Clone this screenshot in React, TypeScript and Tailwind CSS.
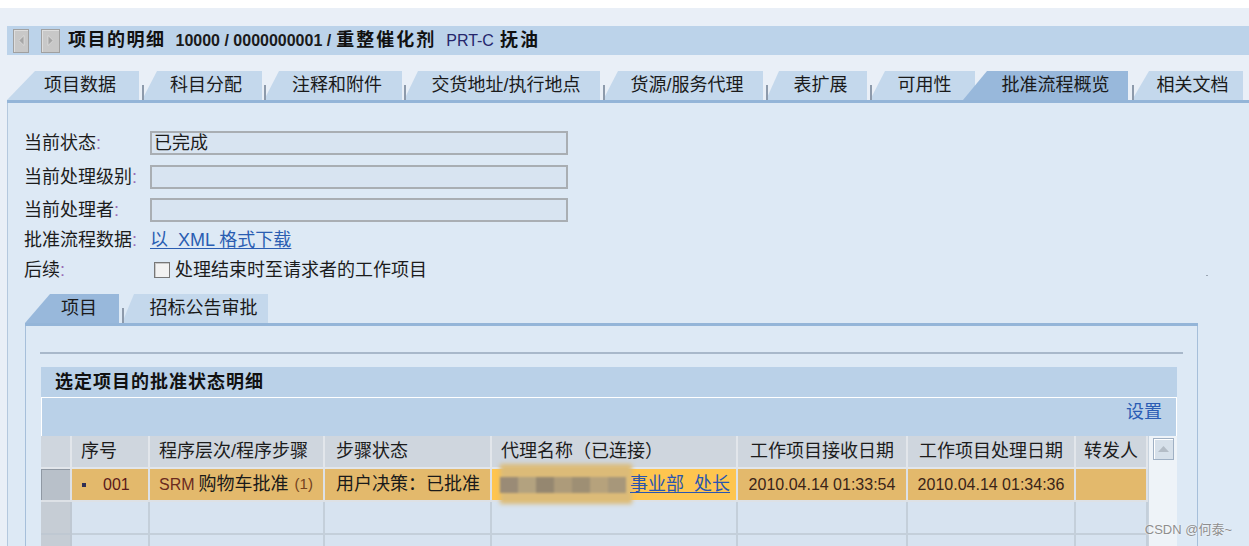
import React from "react";

type TabDef = {
  label: string;
  w: string;
  ml: string;
  pl: string;
  shape: string;
  selected?: boolean;
  mark?: boolean;
};

const mainTabs: TabDef[] = [
  { label: "项目数据", w: "w-[132px]", ml: "", pl: "pl-[14px]", shape: "[clip-path:polygon(28px_0,100%_0,100%_100%,0_100%)]" },
  { label: "科目分配", w: "w-[120px]", ml: "ml-[3px]", pl: "pl-[8px]", shape: "[clip-path:polygon(15px_0,100%_0,100%_100%,0_100%)]", mark: true },
  { label: "注释和附件", w: "w-[138px]", ml: "ml-[2px]", pl: "pl-[8px]", shape: "[clip-path:polygon(15px_0,100%_0,100%_100%,0_100%)]", mark: true },
  { label: "交货地址/执行地点", w: "w-[196px]", ml: "ml-[2px]", pl: "pl-[8px]", shape: "[clip-path:polygon(14px_0,100%_0,100%_100%,0_100%)]", mark: true },
  { label: "货源/服务代理", w: "w-[160px]", ml: "ml-[3px]", pl: "pl-[8px]", shape: "[clip-path:polygon(15px_0,100%_0,100%_100%,0_100%)]", mark: true },
  { label: "表扩展", w: "w-[101px]", ml: "ml-[3px]", pl: "pl-[8px]", shape: "[clip-path:polygon(13px_0,100%_0,100%_100%,0_100%)]", mark: true },
  { label: "可用性", w: "w-[105px]", ml: "ml-[3px]", pl: "pl-[4px]", shape: "[clip-path:polygon(15px_0,100%_0,100%_100%,0_100%)]", mark: true },
  { label: "批准流程概览", w: "w-[165px]", ml: "-ml-[12px]", pl: "pl-[20px]", shape: "[clip-path:polygon(24px_0,100%_0,100%_100%,0_100%)]", selected: true },
  { label: "相关文档", w: "w-[111px]", ml: "ml-[4px]", pl: "pl-[10px]", shape: "[clip-path:polygon(17px_0,100%_0,100%_100%,0_100%)]", mark: true },
];

const subTabs: TabDef[] = [
  { label: "项目", w: "w-[94px]", ml: "", pl: "pl-[14px]", shape: "[clip-path:polygon(25px_0,100%_0,100%_100%,0_100%)]", selected: true },
  { label: "招标公告审批", w: "w-[146px]", ml: "ml-[3px]", pl: "pl-[17px]", shape: "[clip-path:polygon(12px_0,100%_0,100%_100%,0_100%)]", mark: true },
];

function Tab({ t }: { t: TabDef }) {
  return (
    <div className={`relative h-[29px] shrink-0 ${t.w} ${t.ml} ${t.selected ? "z-10" : ""}`}>
      <div
        className={`flex h-full items-center justify-center whitespace-nowrap text-[18px] text-[#1a1a1a] ${t.pl} ${t.shape} ${
          t.selected ? "bg-[#98b8db]" : "bg-[#c4d8ec]"
        }`}
      >
        {t.label}
      </div>
      {t.mark && <span className="absolute bottom-0 left-0 h-[15px] w-[2px] bg-[#8d9aab]" />}
    </div>
  );
}

function NavButton({ dir, className = "" }: { dir: "left" | "right"; className?: string }) {
  return (
    <div
      className={`flex h-[24px] items-center justify-center border border-[#a0a0a0] bg-[#c8c8c8] shadow-[inset_1px_1px_0_#dedede] ${
        dir === "left" ? "w-[16px]" : "w-[19px]"
      } ${className}`}
    >
      <svg width="7" height="11" viewBox="0 0 7 11">
        {dir === "left" ? (
          <polygon points="6,0.5 0.8,5.5 6,10.5" fill="#a6a6a6" stroke="#e2e2e2" strokeWidth="0.7" />
        ) : (
          <polygon points="1,0.5 6.2,5.5 1,10.5" fill="#a6a6a6" stroke="#e2e2e2" strokeWidth="0.7" />
        )}
      </svg>
    </div>
  );
}

function FormLabel({ children }: { children: React.ReactNode }) {
  return (
    <span className="w-[126px] shrink-0 whitespace-nowrap text-[18px] text-[#1c1c1c]">
      {children}
      <span className="text-[#9a6bb5]">:</span>
    </span>
  );
}

function Field({ value }: { value?: string }) {
  return (
    <div className="flex h-[24px] w-[418px] items-center border-2 border-[#a9aeb3] bg-[#d8e4f1] pl-[2px] text-[18px] leading-[20px] text-[#1c1c1c]">
      {value}
    </div>
  );
}

const cols = "grid grid-cols-[31px_78px_175px_167px_246px_170px_168px_72px]";

const headers = [
  { t: "序号", c: "justify-start pl-[9px]" },
  { t: "程序层次/程序步骤", c: "justify-start pl-[9px]" },
  { t: "步骤状态", c: "justify-start pl-[11px]" },
  { t: "代理名称（已连接）", c: "justify-start pl-[9px]" },
  { t: "工作项目接收日期", c: "justify-center" },
  { t: "工作项目处理日期", c: "justify-center" },
  { t: "转发人", c: "justify-center" },
];

function EmptyRow() {
  return (
    <div className={cols}>
      <div className="h-[33px] border-b-2 border-r-2 border-[#bfc8d2] bg-[#c6cdd5]" />
      {headers.map((h) => (
        <div key={h.t} className="h-[33px] border-b-2 border-r-2 border-[#c4cfda] bg-[#d7e3f0]" />
      ))}
    </div>
  );
}

export default function App() {
  const dataCell = "flex h-[33px] items-center border-b-2 border-r-2 border-[#dde1e6] bg-[#e3b96c] whitespace-nowrap";
  return (
    <div className="relative h-[546px] w-[1249px] overflow-hidden bg-white font-['Liberation_Sans','Noto_Sans_CJK_SC',sans-serif] text-[#111]">
      <div className="mt-[8px] flex h-[538px] flex-col bg-[#e9eff7] pl-[7px]">
        <div className="h-[18px] shrink-0" />

        {/* title bar */}
        <div className="flex h-[29px] shrink-0 items-center whitespace-nowrap bg-[#bcd3ea] pl-[6px]">
          <NavButton dir="left" />
          <NavButton dir="right" className="ml-[12px]" />
          <span className="ml-[8px] text-[18px] font-bold tracking-[1.5px]">项目的明细</span>
          <span className="ml-[10px] text-[16px] font-bold text-[#1a1a1a]">10000 / 0000000001 /</span>
          <span className="ml-[5px] text-[18px] font-bold tracking-[2px]">重整催化剂</span>
          <span className="ml-[10px] text-[16px] text-[#25266c]">PRT-C</span>
          <span className="ml-[6px] text-[18px] font-bold tracking-[2px]">抚油</span>
        </div>

        <div className="h-[16px] shrink-0" />

        {/* main tabs */}
        <div className="flex h-[29px] shrink-0 items-end">
          {mainTabs.map((t) => (
            <Tab key={t.label} t={t} />
          ))}
        </div>
        <div className="h-[3px] shrink-0 bg-[#94b5d8]" />

        {/* main panel */}
        <div className="flex-1 border-l border-[#b4c8de] bg-[#dde9f5] pl-[16px]">
          <div className="pt-[28px]">
            <div className="flex h-[24px] items-center">
              <FormLabel>当前状态</FormLabel>
              <Field value="已完成" />
            </div>
            <div className="mt-[10px] flex h-[24px] items-center">
              <FormLabel>当前处理级别</FormLabel>
              <Field />
            </div>
            <div className="mt-[9px] flex h-[24px] items-center">
              <FormLabel>当前处理者</FormLabel>
              <Field />
            </div>
            <div className="mt-[6px] flex h-[24px] items-center">
              <FormLabel>批准流程数据</FormLabel>
              <span className="whitespace-nowrap text-[18px] text-[#2a5db2] underline decoration-1 underline-offset-2">
                以&nbsp;&nbsp;XML 格式下载
              </span>
            </div>
            <div className="mt-[6px] flex h-[24px] items-center">
              <FormLabel>后续</FormLabel>
              <span className="ml-[4px] h-[16px] w-[16px] border border-[#777777] bg-[#f2f2f2] shadow-[inset_1px_1px_0_#c8c8c8]" />
              <span className="ml-[5px] whitespace-nowrap text-[18px] text-[#1c1c1c]">处理结束时至请求者的工作项目</span>
            </div>
          </div>

          {/* sub tabs */}
          <div className="ml-[1px] mt-[12px] w-[1173px]">
            <div className="flex h-[29px] items-end">
              {subTabs.map((t) => (
                <Tab key={t.label} t={t} />
              ))}
            </div>
            <div className="h-[3px] bg-[#94b5d8]" />
            <div className="h-[240px] border-x border-[#a6bfda] bg-[#dde9f5] px-[14px] pt-[26px]">
              <div className="h-[2px] bg-[#a8b8ca]" />

              <div className="ml-[1px] w-[1136px]">
                <div className="mt-[13px] flex h-[30px] items-center bg-[#bad1e8] pl-[14px] text-[18px] font-bold tracking-[1px] text-[#111]">
                  选定项目的批准状态明细
                </div>
                <div className="flex h-[39px] justify-end border-x border-t border-white bg-[#bad1e8] pr-[14px] pt-[1px]">
                  <span className="text-[18px] text-[#2a5cb4]">设置</span>
                </div>

                <div className="flex">
                  <div className="w-[1107px]">
                    {/* header */}
                    <div className={cols}>
                      <div className="h-[33px] border-b-2 border-r-2 border-[#e2e6eb] bg-[#cfd6de]" />
                      {headers.map((h) => (
                        <div
                          key={h.t}
                          className={`flex h-[33px] items-center whitespace-nowrap border-b-2 border-r-2 border-[#e2e6eb] bg-[#cfd6de] text-[18px] text-[#1c1c1c] ${h.c}`}
                        >
                          {h.t}
                        </div>
                      ))}
                    </div>

                    {/* data row */}
                    <div className={cols}>
                      <div className="h-[33px] border-b-2 border-r-2 border-[#dde1e6] bg-[#b8c0c9] shadow-[inset_1px_1px_0_#8f98a3]" />
                      <div className={`${dataCell} pl-[10px]`}>
                        <span className="h-[4px] w-[4px] bg-[#2f2f55]" />
                        <span className="ml-[17px] text-[16px] text-[#5a1a1a]">001</span>
                      </div>
                      <div className={`${dataCell} pl-[9px]`}>
                        <span className="text-[16px] text-[#6a2a1e]">SRM</span>
                        <span className="ml-[4px] text-[18px] text-[#1a1a1a]">购物车批准</span>
                        <span className="ml-[6px] text-[15px] text-[#74431e]">(1)</span>
                      </div>
                      <div className={`${dataCell} pl-[11px] text-[18px] text-[#1a1a1a]`}>用户决策：已批准</div>
                      <div className={`${dataCell} relative bg-[#fec54f] pl-[8px]`}>
                        <div className="relative h-[26px] w-[128px]">
                          <div className="absolute -top-[8px] left-0 h-[40px] w-[132px] bg-[#dcbb78] blur-[2px]" />
                          <div className="absolute left-0 top-[5px] flex h-[16px] w-[126px] blur-[1px]">
                            <span className="h-full w-[18px] bg-[#9a8b76]" />
                            <span className="h-full w-[18px] bg-[#b3a27f]" />
                            <span className="h-full w-[18px] bg-[#958770]" />
                            <span className="h-full w-[18px] bg-[#ad9b7a]" />
                            <span className="h-full w-[18px] bg-[#9e8f74]" />
                            <span className="h-full w-[18px] bg-[#b6a27c]" />
                            <span className="h-full w-[18px] bg-[#a7977a]" />
                          </div>
                        </div>
                        <span className="relative ml-[2px] text-[18px] text-[#2a55b0] underline decoration-1 underline-offset-2">
                          事业部&nbsp;&nbsp;处长
                        </span>
                      </div>
                      <div className={`${dataCell} justify-center text-[16px] text-[#3a2418]`}>2010.04.14 01:33:54</div>
                      <div className={`${dataCell} justify-center text-[16px] text-[#3a2418]`}>2010.04.14 01:34:36</div>
                      <div className={dataCell} />
                    </div>

                    <EmptyRow />
                    <EmptyRow />
                  </div>

                  {/* scrollbar */}
                  <div className="w-[29px] border-l border-[#c8d3de] bg-[#eef3f8] pl-[4px] pt-[2px]">
                    <div className="flex h-[22px] w-[21px] items-center justify-center border border-[#9fb0c4] bg-[#d6e0ea] shadow-[inset_1px_1px_0_#ffffff]">
                      <svg width="11" height="6" viewBox="0 0 11 6">
                        <polygon points="0,6 5.5,0 11,6" fill="#b3bcc6" />
                      </svg>
                    </div>
                  </div>
                </div>
              </div>
            </div>
          </div>
        </div>
      </div>

      <span className="absolute left-[1206px] top-[275px] h-[1px] w-[2px] bg-[#9aa6b3]" />
      <span className="absolute bottom-[7px] right-[17px] text-[13px] text-[#8e8e8e] [text-shadow:0_0_2px_#ffffff]">
        CSDN @何泰~
      </span>
    </div>
  );
}
